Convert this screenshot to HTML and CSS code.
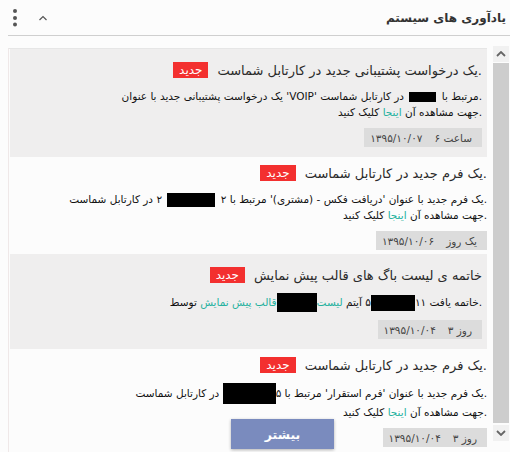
FILE: index.html
```html
<!DOCTYPE html>
<html lang="fa">
<head>
<meta charset="utf-8">
<title>یادآوری های سیستم</title>
<link rel="stylesheet" href="styles.css">
</head>
<body>
<div class="widget">
  <header class="head">
    <div class="tools">
      <svg class="dots" width="8" height="20" viewBox="0 0 8 20"><circle cx="4" cy="3" r="2"/><circle cx="4" cy="10" r="2"/><circle cx="4" cy="16.5" r="2"/></svg>
      <svg class="chev" width="10" height="8" viewBox="0 0 10 8"><polyline points="1.5,6 5,2.5 8.5,6"/></svg>
    </div>
    <h2 class="title">یادآوری های سیستم</h2>
  </header>

  <div class="panel">
    <div class="list">
      <div class="item unread">
        <div class="item-title"><span class="t">.یک درخواست پشتیبانی جدید در کارتابل شماست</span><span class="badge">جدید</span></div>
        <p class="body">.مرتبط با <span class="redact r1"></span> در کارتابل شماست 'VOIP' یک درخواست پشتیبانی جدید با عنوان<br>.جهت مشاهده آن <a class="link">اینجا</a> کلیک کنید</p>
        <div class="time"><span>ساعت ۶</span><span>۱۳۹۵/۱۰/۰۷</span></div>
      </div>

      <div class="item">
        <div class="item-title"><span class="t">.یک فرم جدید در کارتابل شماست</span><span class="badge">جدید</span></div>
        <p class="body">.یک فرم جدید با عنوان 'دریافت فکس - (مشتری)' مرتبط با ۲ <span class="redact r2"></span> ۲ در کارتابل شماست<br>.جهت مشاهده آن <a class="link">اینجا</a> کلیک کنید</p>
        <div class="time"><span>یک روز</span><span>۱۳۹۵/۱۰/۰۶</span></div>
      </div>

      <div class="item unread">
        <div class="item-title"><span class="t">خاتمه ی لیست باگ های قالب پیش نمایش</span><span class="badge">جدید</span></div>
        <p class="body">.خاتمه یافت ۱۱<span class="redact r3b"></span>۵ آیتم <a class="link">لیست</a><span class="redact r3a"></span><a class="link">قالب پیش نمایش</a> توسط</p>
        <div class="time"><span>روز ۳</span><span>۱۳۹۵/۱۰/۰۴</span></div>
      </div>

      <div class="item">
        <div class="item-title"><span class="t">.یک فرم جدید در کارتابل شماست</span><span class="badge">جدید</span></div>
        <p class="body">.یک فرم جدید با عنوان 'فرم استقرار' مرتبط با ۵<span class="redact r4"></span> در کارتابل شماست<br>.جهت مشاهده آن <a class="link">اینجا</a> کلیک کنید</p>
        <div class="time"><span>روز ۳</span><span>۱۳۹۵/۱۰/۰۴</span></div>
      </div>
    </div>

    <div class="scrollbar">
      <div class="sb-btn"><svg width="10" height="6" viewBox="0 0 10 6"><polyline points="1,5 5,1 9,5"/></svg></div>
      <div class="sb-thumb"></div>
      <div class="sb-btn"><svg width="10" height="6" viewBox="0 0 10 6"><polyline points="1,1 5,5 9,1"/></svg></div>
      <div class="sb-corner"></div>
    </div>

    <button class="more">بیشتر</button>
  </div>
</div>
</body>
</html>
```

FILE: styles.css
```css
html, body {
  margin: 0;
  padding: 0;
}
body {
  background: #fcfcfc;
  font-family: "DejaVu Sans", "Noto Sans", sans-serif;
  width: 510px;
  height: 452px;
  overflow: hidden;
}
.widget {
  width: 510px;
}
.head {
  display: flex;
  align-items: center;
  justify-content: space-between;
  height: 35px;
  margin-left: 8px;
  padding-right: 4px;
  border-bottom: 1px solid #cfcfcf;
}
.tools {
  display: flex;
  align-items: center;
  gap: 19px;
  padding-left: 3px;
}
.dots {
  fill: #555;
}
.chev {
  fill: none;
  stroke: #555;
  stroke-width: 1.2;
}
.title {
  margin: 0;
  font-size: 12px;
  font-weight: bold;
  color: #333;
  direction: rtl;
}
.panel {
  position: relative;
  display: flex;
  height: 407px;
  margin-top: 10px;
  padding-left: 8px;
}
.list {
  width: 477px;
  direction: rtl;
  overflow: hidden;
  margin-top: 2px;
  border-top: 1px solid #e6e6e6;
  border-left: 1px solid #efe8e8;
  padding-left: 1px;
}
.item {
  padding: 7px 0 4px;
}
.item.unread {
  background: #efeeee;
  padding: 12px 5px 10px;
}
.item-title {
  display: flex;
  align-items: center;
  gap: 9px;
  height: 18px;
  font-size: 13px;
  color: #2a2a2a;
}
.badge {
  background: #f3302f;
  color: #fff;
  font-size: 12px;
  height: 16px;
  line-height: 16px;
  padding: 0 6px;
}
.body {
  margin: 9px 0 0;
  font-size: 10.5px;
  line-height: 16px;
  color: #111;
}
.link {
  color: #25b19e;
}
.redact {
  display: inline-block;
  background: #000;
  vertical-align: middle;
}
.r1 { width: 27px; height: 10px; margin: 0 2px; }
.r2 { width: 48px; height: 14px; margin: 0 2px; }
.r3a { width: 40px; height: 19px; }
.r3b { width: 44px; height: 16px; }
.r4 { width: 53px; height: 21px; }
.time {
  display: flex;
  width: fit-content;
  align-items: center;
  gap: 12px;
  height: 19px;
  margin-top: 8px;
  padding: 0 10px 0 6px;
  background: #dcdcdc;
  color: #444;
  font-size: 10.5px;
}
.scrollbar {
  display: flex;
  flex-direction: column;
  width: 16px;
  height: 402px;
  margin-left: 6px;
}
.sb-btn {
  height: 16px;
  background: #f1f1f1;
  display: flex;
  align-items: center;
  justify-content: center;
}
.sb-btn svg {
  fill: none;
  stroke: #666;
  stroke-width: 1.8;
}
.sb-thumb {
  flex: 1;
  background: #cdcdcd;
  margin: 1px 0 2px;
}
.sb-corner {
  height: 7px;
}
.more {
  position: absolute;
  left: 231px;
  top: 373px;
  width: 103px;
  height: 30px;
  border: none;
  background: #7a8bbe;
  color: #fff;
  font-family: "DejaVu Sans", sans-serif;
  font-size: 12.5px;
  font-weight: bold;
  box-shadow: 0 1px 3px rgba(0, 0, 0, 0.3);
  direction: rtl;
}
```
